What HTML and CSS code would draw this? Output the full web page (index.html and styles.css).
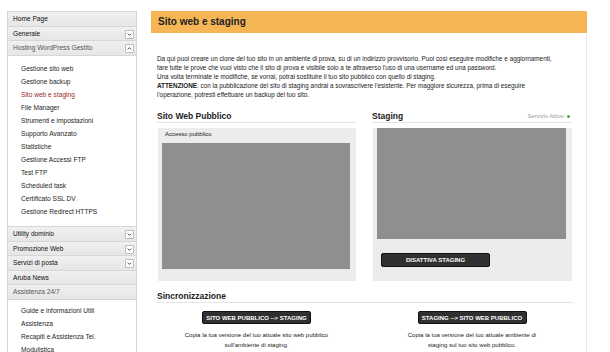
FILE: index.html
```html
<!DOCTYPE html>
<html lang="it">
<head>
  <meta charset="UTF-8">
  <title>Sito web e staging</title>
  <link rel="stylesheet" href="styles.css">
</head>
<body>
  <div class="page">
    <nav class="sidebar">
      <div class="menu-row">Home Page</div>
      <div class="menu-row">Generale <span class="toggle"><svg viewBox="0 0 8 8"><path d="M2 3 L4 5 L6 3" /></svg></span></div>
      <div class="menu-row open">Hosting WordPress Gestito <span class="toggle"><svg viewBox="0 0 8 8"><path d="M2 5 L4 3 L6 5" /></svg></span></div>
      <ul class="submenu">
        <li>Gestione sito web</li>
        <li>Gestione backup</li>
        <li class="active">Sito web e staging</li>
        <li>File Manager</li>
        <li>Strumenti e impostazioni</li>
        <li>Supporto Avanzato</li>
        <li>Statistiche</li>
        <li>Gestione Accessi FTP</li>
        <li>Test FTP</li>
        <li>Scheduled task</li>
        <li>Certificato SSL DV</li>
        <li>Gestione Redirect HTTPS</li>
      </ul>
      <div class="menu-row">Utility dominio <span class="toggle"><svg viewBox="0 0 8 8"><path d="M2 3 L4 5 L6 3" /></svg></span></div>
      <div class="menu-row">Promozione Web <span class="toggle"><svg viewBox="0 0 8 8"><path d="M2 3 L4 5 L6 3" /></svg></span></div>
      <div class="menu-row">Servizi di posta <span class="toggle"><svg viewBox="0 0 8 8"><path d="M2 3 L4 5 L6 3" /></svg></span></div>
      <div class="menu-row">Aruba News</div>
      <div class="menu-row open">Assistenza 24/7</div>
      <ul class="submenu last">
        <li>Guide e informazioni Utili</li>
        <li>Assistenza</li>
        <li>Recapiti e Assistenza Tel.</li>
        <li>Modulistica</li>
      </ul>
    </nav>

    <main class="main">
      <h1 class="title-bar">Sito web e staging</h1>
      <div class="panel">
        <p class="intro">
          Da qui puoi creare un clone del tuo sito in un ambiente di prova, su di un indirizzo provvisorio. Puoi così eseguire modifiche e aggiornamenti,<br>
          fare tutte le prove che vuoi visto che il sito di prova è visibile solo a te attraverso l'uso di una username ed una password.<br>
          Una volta terminate le modifiche, se vorrai, potrai sostituire il tuo sito pubblico con quello di staging.<br>
          <strong>ATTENZIONE</strong>: con la pubblicazione del sito di staging andrai a sovrascrivere l'esistente. Per maggiore sicurezza, prima di eseguire<br>
          l'operazione, potresti effettuare un backup del tuo sito.
        </p>

        <div class="cols">
          <section>
            <h2 class="section-head">Sito Web Pubblico</h2>
            <div class="site-box">
              <div class="box-label">Accesso pubblico</div>
              <div class="preview preview-public"></div>
            </div>
          </section>
          <section>
            <h2 class="section-head">Staging <span class="status">Servizio Attivo <i class="dot"></i></span></h2>
            <div class="site-box">
              <div class="preview preview-staging"></div>
              <button class="dark-btn wide">DISATTIVA STAGING</button>
            </div>
          </section>
        </div>

        <h2 class="section-head sync-head">Sincronizzazione</h2>
        <div class="cols sync">
          <div class="sync-item">
            <button class="dark-btn">SITO WEB PUBBLICO --&gt; STAGING</button>
            <p>Copia la tua versione del tuo attuale sito web pubblico<br>sull'ambiente di staging.</p>
          </div>
          <div class="sync-item">
            <button class="dark-btn">STAGING --&gt; SITO WEB PUBBLICO</button>
            <p>Copia la tua versione del tuo attuale ambiente di<br>staging sul tuo sito web pubblico.</p>
          </div>
        </div>
      </div>
    </main>
  </div>
</body>
</html>
```

FILE: styles.css
```css
body {
  margin: 0;
  background: #fff;
  font-family: "Liberation Sans", Arial, sans-serif;
  color: #222;
}
.page {
  display: flex;
  align-items: flex-start;
  padding-top: 11px;
  height: 341px;
  overflow: hidden;
}

/* sidebar */
.sidebar {
  width: 128px;
  margin-left: 7px;
  border: 1px solid #d4d4d4;
  border-top: none;
  font-size: 6.6px;
}
.menu-row {
  position: relative;
  height: 13.5px;
  line-height: 13.5px;
  padding-left: 5px;
  background: linear-gradient(#f0f0f0, #e6e6e6);
  border-top: 1px solid #d6d6d6;
  color: #111;
}
.menu-row.open {
  color: #555;
}
.toggle {
  position: absolute;
  right: 2px;
  top: 3px;
  width: 7px;
  height: 7px;
  background: #fff;
  border: 1px solid #bdbdbd;
  border-radius: 1px;
}
.toggle svg {
  display: block;
  width: 7px;
  height: 7px;
  fill: none;
  stroke: #444;
  stroke-width: 1.1;
}
.submenu {
  list-style: none;
  margin: 0;
  padding: 6px 0 8.5px 13px;
  background: #fff;
  border-top: 1px solid #d6d6d6;
}
.submenu.last {
  padding-top: 4.5px;
}
.submenu li {
  height: 13px;
  line-height: 13px;
  color: #1e1e1e;
}
.submenu li.active {
  color: #9a2a1c;
}

/* main */
.main {
  width: 436px;
  margin-left: 14px;
}
.title-bar {
  margin: 0;
  height: 22px;
  line-height: 22px;
  padding-left: 7px;
  background: #f6b656;
  font-size: 10px;
  font-weight: bold;
  color: #222;
}
.panel {
  border-right: 1px solid #e8e8e8;
  padding: 0 14px 0 6px;
  height: 320px;
}
.intro {
  margin: 0;
  padding-top: 21px;
  font-size: 6.35px;
  line-height: 9px;
  color: #1a1a1a;
  white-space: nowrap;
}
.cols {
  display: grid;
  grid-template-columns: 199px 200px;
  column-gap: 16px;
}
.section-head {
  margin: 0;
  height: 12px;
  line-height: 12px;
  margin-top: 11px;
  border-bottom: 1px solid #e4e4e4;
  font-size: 8.5px;
  font-weight: bold;
  color: #222;
  display: flex;
  justify-content: space-between;
  align-items: center;
}
.status {
  font-size: 5.8px;
  font-weight: normal;
  color: #999;
  display: flex;
  align-items: center;
  gap: 3px;
  padding-right: 2px;
}
.dot {
  width: 3px;
  height: 3px;
  border-radius: 50%;
  background: #3aa843;
}
.site-box {
  margin: 5px 0 0 1px;
  height: 153px;
  background: #ececec;
  padding: 0 6px 0 4px;
  box-sizing: border-box;
}
.box-label {
  padding: 1px 0 0 3px;
  height: 14px;
  line-height: 10px;
  font-size: 6px;
  color: #222;
}
.preview {
  background: #8f8f8f;
}
.preview-public {
  height: 126px;
}
.preview-staging {
  margin-top: 1px;
  height: 111px;
}
.dark-btn {
  display: block;
  height: 13px;
  width: 109px;
  padding: 0;
  border: 1px solid #111;
  border-radius: 2px;
  background: #303030;
  color: #fff;
  font-family: "Liberation Sans", Arial, sans-serif;
  font-size: 6px;
  font-weight: bold;
}
.dark-btn.wide {
  margin: 14px 0 0 4px;
  height: 14px;
}
.sync-head {
  margin-top: 9px;
  width: 416px;
}
.sync-item {
  display: flex;
  flex-direction: column;
  align-items: center;
  padding-top: 8px;
}
.sync-item p {
  margin: 6px 0 0;
  font-size: 6px;
  line-height: 10px;
  text-align: center;
  color: #222;
}
```
